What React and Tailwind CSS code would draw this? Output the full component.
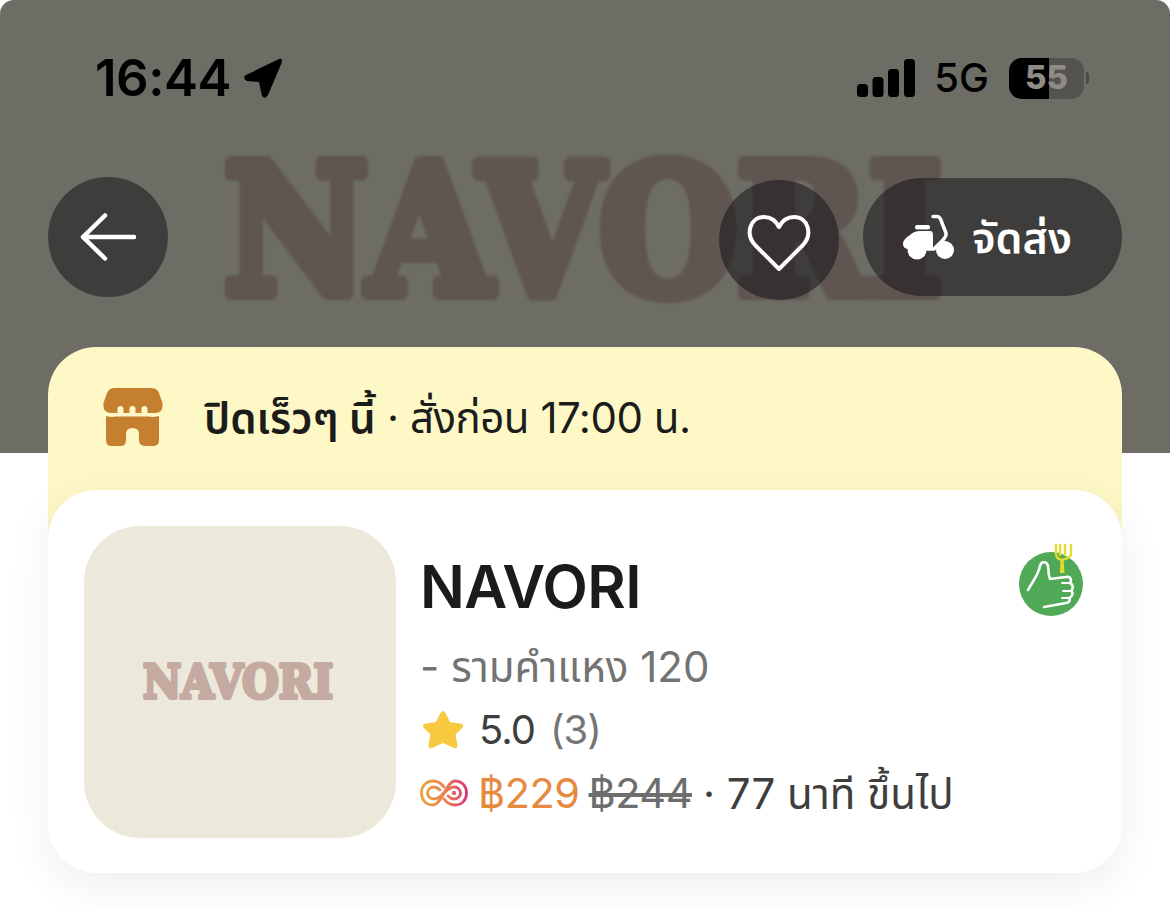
import React from "react";

const latin = "font-['Inter','Noto_Sans','Noto_Sans_Thai','Liberation_Sans',sans-serif]";

function Wordmark({ width, height, color, fontSize, stroke, x, y, length }) {
  return (
    <svg width={width} height={height} viewBox={`0 0 ${width} ${height}`}>
      <text
        x={x}
        y={y}
        textLength={length}
        lengthAdjust="spacingAndGlyphs"
        fill={color}
        stroke={color}
        strokeWidth={stroke}
        strokeLinejoin="round"
        fontFamily="'DejaVu Serif', serif"
        fontWeight="700"
        fontSize={fontSize}
      >
        NAVORI
      </text>
    </svg>
  );
}

function LocationArrow() {
  return (
    <svg width="40" height="42" viewBox="0 0 40 42">
      <path d="M36 2 L3 18 Q-1 21 4 24 L16 25 L19 39 Q22 43 25 38 L39 5 Q39.500 0.500 36 2 Z" fill="#000" />
    </svg>
  );
}

function Signal() {
  return (
    <svg width="58" height="38" viewBox="0 0 58 38" fill="#000">
      <rect x="0" y="25" width="11" height="13" rx="3.5" />
      <rect x="15.5" y="18" width="11" height="20" rx="3.5" />
      <rect x="31" y="10" width="11" height="28" rx="3.5" />
      <rect x="47" y="0" width="11" height="38" rx="3.5" />
    </svg>
  );
}

function Battery() {
  return (
    <div className="flex items-center gap-[2px]">
      <div className="relative w-[75px] h-[41px] rounded-[13px] overflow-hidden bg-[#55534e] flex">
        <div className="w-[40px] h-full bg-black" />
        <span className={`absolute inset-0 flex items-center justify-center text-[33px] font-extrabold text-[#8d8c86] ${latin}`}>55</span>
      </div>
      <div className="w-[3px] h-[12px] rounded-r-full bg-[#4a4944]" />
    </div>
  );
}

function BackArrow() {
  return (
    <svg width="56" height="52" viewBox="0 0 56 52" fill="none" stroke="#fff" strokeWidth="4.5" strokeLinecap="round" strokeLinejoin="round">
      <path d="M54 26 H3 M25 4.500 L3 26 L25 47.500" />
    </svg>
  );
}

function Heart() {
  return (
    <svg className="mt-[5px]" width="64" height="58" viewBox="0 0 64 58" fill="none" stroke="#fff" strokeWidth="4" strokeLinejoin="round">
      <path d="M32 55 L8 31 C-2 20 3 3 17 3 C24 3 29 7 32 13 C35 7 40 3 47 3 C61 3 66 20 56 31 Z" />
    </svg>
  );
}

function Scooter() {
  return (
    <svg width="52" height="46" viewBox="0 0 52 46" fill="#fff">
      <rect x="12" y="11" width="15" height="4.500" rx="2" />
      <path d="M7 21 Q11 17 17 17 H27 Q30 17 30 21 V35 H6 Q0 35 0 30 Q0 25 7 21 Z" />
      <circle cx="14" cy="36" r="9.500" />
      <circle cx="42" cy="36" r="9" />
      <path d="M30 2.500 H34 C37 2.500 38 5 39 9 L43 19 C44 23 40 26 37 29 L31 35 H24" fill="none" stroke="#fff" strokeWidth="3.500" strokeLinecap="round" strokeLinejoin="round" />
    </svg>
  );
}

function Store() {
  return (
    <svg width="60" height="60" viewBox="0 0 60 60" fill="#c47f2f">
      <path d="M12 0 H48 Q54 0 56 5 L59.500 15 Q60.500 25 52 25 H8 Q-0.500 25 0.500 15 L4 5 Q6 0 12 0 Z" />
      <g fill="#fef8c7">
        <rect x="14.500" y="18" width="6" height="10" rx="3" />
        <rect x="26.500" y="18" width="6" height="10" rx="3" />
        <rect x="38.500" y="18" width="6" height="10" rx="3" />
      </g>
      <path d="M3 28 Q8 29.500 13 28.500 H45 Q50 29.500 56 28 V52 Q56 58 50 58 H43 Q36 58 36 52 V46 Q36 40 29.500 40 Q23 40 23 46 V52 Q23 58 17 58 H9 Q3 58 3 52 Z" />
    </svg>
  );
}

function ThumbBadge() {
  return (
    <svg width="66" height="74" viewBox="0 0 66 74">
      <circle cx="33" cy="42" r="32" fill="#4fa957" />
      <path d="M38 3 V12 C38 15 40 17 44 18 C48 17 53 15 53 12 V3 M42 3 V13 M47 3 V13" fill="none" stroke="#e4dc2c" strokeWidth="2.4" strokeLinecap="round" />
      <path d="M42.500 17 H45.500 L46.500 31 L42 31 Z" fill="#e4dc2c" />
      <path d="M10 48 C14 40 20 34 22 24 C23 19 29 19 30 24 C31 30 30 33 32 37 L48 35 C53 34 54 38 52 41 C56 43 55 47 53 49 C56 51 54 55 51 56 C53 59 50 61 48 61 L26 65" fill="none" stroke="#fff" strokeWidth="2.6" strokeLinecap="round" strokeLinejoin="round" />
      <path d="M44 41 H52 M45 49 H53 M44 56 H51" fill="none" stroke="#fff" strokeWidth="2" strokeLinecap="round" />
    </svg>
  );
}

function Star() {
  return (
    <svg width="44" height="40" viewBox="0 0 44 40">
      <path d="M22 1 Q23.500 1 25 4 L29 12 L39 13.500 Q43 14.500 42 17 L34.500 24.500 L36.500 35 Q36.500 39 33 38 L22 33 L11 38 Q7.500 39 7.500 35 L9.500 24.500 L2 17 Q1 14.500 5 13.500 L15 12 L19 4 Q20.500 1 22 1 Z" fill="#f6c93f" />
    </svg>
  );
}

function LoopMark() {
  return (
    <svg width="48" height="30" viewBox="0 0 48 30" fill="none" strokeLinecap="round">
      <defs>
        <linearGradient id="loop" gradientUnits="userSpaceOnUse" x1="0" y1="0" x2="48" y2="0">
          <stop offset="0" stopColor="#eda53a" />
          <stop offset="0.55" stopColor="#ea7f4f" />
          <stop offset="1" stopColor="#d8307f" />
        </linearGradient>
      </defs>
      <path d="M24 9 C21 5 17 3 13 3 C6 3 1.500 8 1.500 15 C1.500 22 6 27 13 27 C22 27 26 3 35 3 C42 3 46.500 8 46.500 15 C46.500 22 42 27 35 27 C31 27 27 25 24 21" stroke="url(#loop)" strokeWidth="2.800" />
      <path d="M20 12 C18 10 16 9 14 9 C10 9 7.500 12 7.500 15 C7.500 18 10 21 14 21 C22 21 26 9 34 9 C38 9 40.500 12 40.500 15 C40.500 18 38 21 34 21 C32 21 30 20 28 18" stroke="url(#loop)" strokeWidth="2.800" />
      <circle cx="34" cy="15" r="2.200" fill="#e8615f" />
    </svg>
  );
}

export default function App() {
  return (
    <div className={`w-[1170px] h-[907px] bg-white overflow-hidden relative ${latin}`}>
      {/* hero */}
      <div className="relative h-[453px] bg-[#6d6c65] rounded-tl-[14px] rounded-tr-[14px] overflow-hidden">
        <div className="absolute left-[208px] top-[143px] blur-[1px]">
          <Wordmark width={955} height={200} x={16} y={150} length={718} fontSize={178} stroke={14} color="#605651" />
        </div>

        <div className="relative flex items-center justify-between pt-[57px] pl-[95px] pr-[81px]">
          <div className="flex items-center gap-[12px]">
            <span className="text-[51px] leading-[42px] font-semibold text-black tracking-[-0.5px]">16:44</span>
            <LocationArrow />
          </div>
          <div className="flex items-center">
            <Signal />
            <span className="ml-[19px] mr-[20px] text-[40px] leading-[42px] font-medium text-black">5G</span>
            <Battery />
          </div>
        </div>

        <div className="relative flex items-center mt-[75px] px-[48px]">
          <button className="w-[120px] h-[120px] rounded-full bg-[rgba(6,6,14,0.46)] flex items-center justify-center">
            <BackArrow />
          </button>
          <button className="ml-auto w-[120px] h-[120px] mt-[6px] rounded-full bg-[rgba(6,6,14,0.46)] flex items-center justify-center">
            <Heart />
          </button>
          <button className="ml-[24px] w-[259px] h-[118px] rounded-full bg-[rgba(6,6,14,0.46)] flex items-center pl-[40px] gap-[17px] text-white text-[43px] font-semibold">
            <Scooter />
            <span>จัดส่ง</span>
          </button>
        </div>
      </div>

      {/* floating card */}
      <div className="relative -mt-[106px] mx-[48px]">
        <div className="h-[200px] rounded-t-[48px] bg-gradient-to-b from-[#fef8c7] from-70% to-[#fbf4c4] flex items-start pt-[41px] pl-[55px]">
          <Store />
          <p className="ml-[41px] mt-[3px] text-[42px] leading-[54px] tracking-[-0.5px] text-[#1c1c1c]">
            <span className="font-semibold tracking-normal">ปิดเร็วๆ นี้</span> · สั่งก่อน 17:00 น.
          </p>
        </div>

        <div className="relative -mt-[57px] h-[383px] rounded-[48px] bg-white shadow-[0_12px_44px_rgba(0,0,0,0.07)] flex pt-[36px] pl-[36px]">
          <div className="w-[312px] h-[312px] shrink-0 rounded-[56px] bg-[#ece9da] flex items-center justify-center">
            <Wordmark width={270} height={60} x={38} y={46} length={190} fontSize={46} stroke={4} color="#c4aaa0" />
          </div>

          <div className="ml-[24px] flex-1 min-w-0">
            <h1 className="text-[59px] leading-[70px] font-semibold text-[#1b1b1b] tracking-[-0.5px] mt-[26px]">NAVORI</h1>
            <p className="mt-[17px] text-[42px] leading-[56px] text-[#737373]">- รามคำแหง 120</p>
            <div className="flex items-center mt-[10px] h-[50px] text-[40px] tracking-[-1px]">
              <span className="ml-[1px]"><Star /></span>
              <span className="ml-[14px] text-[#3e3e3e]">5.0</span>
              <span className="ml-[15px] text-[#757575]">(3)</span>
            </div>
            <div className="flex items-center mt-[10px] h-[56px] text-[41.5px] tracking-[-0.5px]">
              <LoopMark />
              <span className="ml-[10px] text-[#e58a3f]">฿229</span>
              <span className="ml-[9px] text-[#6e6e6e] line-through">฿244</span>
              <span className="ml-[11px] text-[42px] tracking-normal text-[#3e3e3e]">· 77 นาที ขึ้นไป</span>
            </div>
          </div>

          <div className="absolute right-[38px] top-[52px]">
            <ThumbBadge />
          </div>
        </div>
      </div>
    </div>
  );
}
